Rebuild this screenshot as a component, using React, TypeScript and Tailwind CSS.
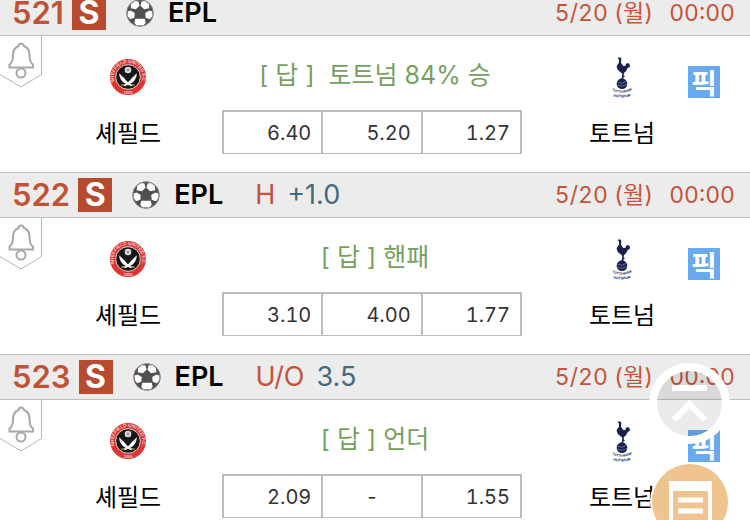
import React from 'react';

interface Match {
  id: number;
  league: string;
  market?: string;
  line?: string;
  answer: string;
  odds: string[];
}

const matches: Match[] = [
  { id: 521, league: 'EPL', answer: '[ 답 ]  토트넘 84% 승', odds: ['6.40', '5.20', '1.27'] },
  { id: 522, league: 'EPL', market: 'H', line: '+1.0', answer: '[ 답 ] 핸패', odds: ['3.10', '4.00', '1.77'] },
  { id: 523, league: 'EPL', market: 'U/O', line: '3.5', answer: '[ 답 ] 언더', odds: ['2.09', '-', '1.55'] },
];

const SoccerBall = () => (
  <svg viewBox="0 0 54 54" className="w-7 h-7 shrink-0" aria-hidden="true">
    <circle cx="27" cy="27" r="26" fill="#505050" />
    <g fill="#fff">
      <path d="M10 9 L17 4 L24 5 L26 13 L19 20 L9 18Z" />
      <path d="M44 9 L37 4 L30 5 L28 13 L35 20 L45 18Z" />
      <path d="M3 24 L9 22 L17 27 L16 36 L8 39 L3 33Z" />
      <path d="M51 24 L45 22 L37 27 L38 36 L46 39 L51 33Z" />
      <path d="M18 38 L36 38 L38 46 L34 51 L20 51 L16 46Z" />
    </g>
    <circle cx="27" cy="27" r="25.5" fill="none" stroke="#8a8a8a" strokeWidth="1.5" />
  </svg>
);

const BellTag = () => (
  <svg viewBox="0 0 42 52" className="w-[42px] h-[52px]" fill="none" aria-hidden="true">
    <path d="M41.5 0 V38.5 L21 51 L0 38.5" stroke="#b5b5b5" />
    <g stroke="#a8a8a8" strokeWidth="2">
      <path d="M21 7.5 C19.5 7.5 18.7 8.5 18.5 10 C15 11.5 13 14.5 13 19 C13 24.5 12 27 9.5 28.5 V31.5 H33 V28.5 C30.5 27 29.5 24.5 29.5 19 C29.5 14.5 27.5 11.5 24 10 C23.5 8.5 22.5 7.5 21 7.5Z" />
      <circle cx="21" cy="37" r="4.5" />
    </g>
  </svg>
);

const SheffieldCrest = () => (
  <svg viewBox="0 0 108 108" className="w-9 h-9" role="img" aria-label="셰필드">
    <circle cx="54" cy="54" r="54" fill="#df3531" />
    <circle cx="54" cy="54" r="37" fill="#17171a" stroke="#e0d0d0" strokeWidth="3" />
    <path id="crest-top" d="M13 68 A43 43 0 1 1 95 68" fill="none" />
    <text fill="#f8d4d2" fontSize="14" fontWeight="700" fontFamily="Liberation Sans, sans-serif">
      <textPath href="#crest-top" startOffset="50%" textAnchor="middle">SHEFFIELD UNITED F.C.</textPath>
    </text>
    <text x="54" y="104" textAnchor="middle" fill="#f8c4c2" fontSize="12" fontWeight="700" fontFamily="Liberation Sans, sans-serif">1889</text>
    <circle cx="54" cy="33" r="10" fill="#dcdcdc" />
    <circle cx="54" cy="33" r="4" fill="#8f8f8f" />
    <path d="M28 43 C27 52 31 62 38 68 C44 73 54 78 64 82 L67 78 C56 73 50 67 45 60 C40 54 33 50 28 43Z" fill="#fff" />
    <path d="M80 43 C81 52 77 62 70 68 C64 73 54 78 44 82 L41 78 C52 73 58 67 63 60 C68 54 75 50 80 43Z" fill="#fff" />
    <path d="M34 78 L46 78 M62 78 L74 78" stroke="#d5c84b" strokeWidth="3" />
  </svg>
);

const TottenhamCrest = () => (
  <svg viewBox="0 0 60 123" className="w-5 h-[41px]" role="img" aria-label="토트넘">
    <g fill="#17224f">
      <path d="M17 4 L21 1 L26 2 L28 6 L27 17 L34 27 L40 27 L42 20 L49 18 L54 24 L53 30 L47 33 L42 43 L36 48 L35 55 L39 60 L34 61 L34 66 L29 66 L31 50 L25 45 L18 40 L14 30 L15 25 L21 17 L21 7Z" />
      <circle cx="30" cy="80" r="16" />
    </g>
    <path d="M17 76 Q30 83 43 73 M16 84 Q30 92 45 82" fill="none" stroke="#8993b6" strokeWidth="2" />
    <path id="spurs-a" d="M0 100 Q30 115 60 99" fill="none" />
    <path id="spurs-b" d="M3 118 Q30 125 57 117" fill="none" />
    <g fill="#17224f" fontWeight="700" fontFamily="Liberation Sans, sans-serif" textAnchor="middle">
      <text fontSize="10">
        <textPath href="#spurs-a" startOffset="50%">TOTTENHAM</textPath>
      </text>
      <text fontSize="11">
        <textPath href="#spurs-b" startOffset="50%">HOTSPUR</textPath>
      </text>
    </g>
  </svg>
);

const MatchHeader: React.FC<{ match: Match }> = ({ match }) => (
  <header className="flex items-center h-[46px] pl-3 pr-[15px] border-y border-[#bdbdbd] bg-[#ececec] whitespace-nowrap">
    <span className="text-[31px] leading-8 font-semibold text-[#c05235]">{match.id}</span>
    <span className="flex items-center justify-center w-[34px] h-[34px] ml-2 bg-[#b84a2e] text-white text-[32px] leading-8 font-bold">
      S
    </span>
    <span className="ml-5">
      <SoccerBall />
    </span>
    <h2 className="ml-3.5 text-[27px] leading-8 font-semibold text-black">{match.league}</h2>
    {match.market && (
      <p className="flex gap-3 ml-8 text-[27px] leading-8">
        <span className="text-[#c4553a]">{match.market}</span>
        <span className="text-[#456a7e]">{match.line}</span>
      </p>
    )}
    <p className="flex gap-4 ml-auto text-[23px] leading-8 tabular-nums text-[#c4553a]">
      <span>5/20 (월)</span>
      <span>00:00</span>
    </p>
  </header>
);

const MatchRow: React.FC<{ match: Match }> = ({ match }) => (
  <article>
    <MatchHeader match={match} />
    <div className="grid grid-cols-[42px_180fr_300fr_166fr_62px] items-start h-[136px]">
      <button type="button" aria-label="알림">
        <BellTag />
      </button>
      <div className="flex flex-col items-center pr-2">
        <div className="flex items-center h-[74px] pt-2">
          <SheffieldCrest />
        </div>
        <p className="text-2xl leading-12 text-black">셰필드</p>
      </div>
      <div>
        <p className="flex items-center justify-center h-[74px] pt-1 pl-1.5 text-[25px] leading-8 whitespace-pre text-[#779f5f]">
          {match.answer}
        </p>
        <table className="w-full h-11 table-fixed border-separate border-spacing-0 border-l-2 border-t-2 border-b border-[#bdbdbd]">
          <tbody>
            <tr>
              {match.odds.map((odd, index) => (
                <td
                  key={index}
                  className={`p-0 border-r-2 border-[#bdbdbd] text-xl leading-6 tabular-nums text-[#333] ${
                    odd === '-' ? 'text-center' : 'pr-2.5 text-right'
                  }`}
                >
                  {odd}
                </td>
              ))}
            </tr>
          </tbody>
        </table>
      </div>
      <div className="flex flex-col items-center pl-[34px]">
        <div className="flex items-center h-[74px] pt-2">
          <TottenhamCrest />
        </div>
        <p className="text-2xl leading-12 text-black">토트넘</p>
      </div>
      <button
        type="button"
        className="flex items-center justify-center w-8 h-8 mt-[30px] pt-1 bg-[#69a9ee] text-white text-[28px] leading-8 font-bold"
      >
        픽
      </button>
    </div>
  </article>
);

export default function App() {
  return (
    <div className="h-screen overflow-hidden bg-white font-['Inter','Noto_Sans_CJK_KR',sans-serif]">
      <main className="-mt-2.5">
        {matches.map(match => (
          <MatchRow key={match.id} match={match} />
        ))}
      </main>

      <nav className="fixed right-5 -bottom-5 flex flex-col items-center gap-5">
        <button type="button" aria-label="맨 위로" className="w-[81px] h-[81px] rounded-full border-8 border-white bg-black/8 bg-clip-padding">
          <svg viewBox="0 0 65 65" fill="none" stroke="#fff" aria-hidden="true">
            <path d="M15 17 H50" strokeWidth="6" />
            <path d="M17 49 L32.5 33 L48 49" strokeWidth="6" />
          </svg>
        </button>
        <button type="button" aria-label="목록" className="w-19 h-19 rounded-full bg-[#efc48e] ring-2 ring-white">
          <svg viewBox="0 0 76 76" fill="none" aria-hidden="true">
            <path d="M17 17 H60 V64 H17Z M21 27 V59 H56 V27Z" fill="#fff" fillRule="evenodd" />
            <path d="M26 36 H51 M26 47 H51" stroke="#fff" strokeWidth="5" />
          </svg>
        </button>
      </nav>
    </div>
  );
}
